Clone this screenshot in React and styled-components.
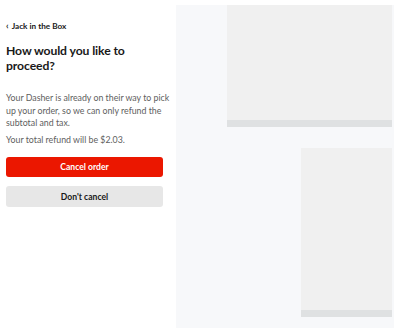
import React from "react";
import styled, { createGlobalStyle } from "styled-components";

const Global = createGlobalStyle`
  html, body { margin: 0; padding: 0; background: #ffffff; }
  body { font-family: "Lato", "Liberation Sans", sans-serif; -webkit-font-smoothing: antialiased; }
  * { box-sizing: border-box; }
`;

const Page = styled.div`
  display: flex;
  width: 398px;
  height: 329px;
  overflow: hidden;
  background: #ffffff;
`;

const Panel = styled.div`
  flex: 0 0 176px;
  padding: 20px 6px 0 6px;
  display: flex;
  flex-direction: column;
  color: #191919;
`;

const BackLink = styled.div`
  font-size: 8.2px;
  font-weight: 700;
  line-height: 12px;
  display: flex;
  align-items: center;
  gap: 3px;
`;

const Chevron = styled.span`
  font-size: 9px;
  font-weight: 700;
`;

const Heading = styled.h1`
  margin: 11px 0 0 0;
  font-size: 12.2px;
  font-weight: 700;
  line-height: 15px;
  letter-spacing: -0.1px;
`;

const Body = styled.p`
  margin: ${(p) => p.$mt}px 0 0 0;
  font-size: 8.8px;
  line-height: 12.5px;
  color: #606060;
`;

const Button = styled.button`
  display: block;
  width: 157px;
  height: ${(p) => p.$h}px;
  margin-top: ${(p) => p.$mt}px;
  border: none;
  border-radius: 3px;
  font-family: inherit;
  font-size: 8.6px;
  font-weight: 700;
  background: ${(p) => (p.$primary ? "#eb1700" : "#e7e7e7")};
  color: ${(p) => (p.$primary ? "#ffffff" : "#191919")};
  padding: 0;
`;

const Canvas = styled.div`
  flex: 0 0 218px;
  height: 323px;
  margin-top: 5px;
  background: #f7f8fa;
  display: flex;
  flex-direction: column;
`;

const Card = styled.div`
  align-self: flex-end;
  width: ${(p) => p.$w}px;
  margin-top: ${(p) => p.$mt}px;
  margin-right: 2px;
  display: flex;
  flex-direction: column;
`;

const CardFace = styled.div`
  height: ${(p) => p.$h}px;
  background: #f0f0f0;
`;

const CardBar = styled.div`
  height: 7px;
  background: #dfe1e2;
`;

export default function App() {
  return (
    <>
      <Global />
      <Page>
        <Panel>
          <BackLink>
            <Chevron>‹</Chevron>
            <span>Jack in the Box</span>
          </BackLink>
          <Heading>How would you like to proceed?</Heading>
          <Body $mt={19}>
            Your Dasher is already on their way to pick up your order, so we can only refund the subtotal and tax.
          </Body>
          <Body $mt={4}>Your total refund will be $2.03.</Body>
          <Button $primary $h={20} $mt={11}>Cancel order</Button>
          <Button $h={21} $mt={9}>Don't cancel</Button>
        </Panel>
        <Canvas>
          <Card $w={165} $mt={0}>
            <CardFace $h={115} />
            <CardBar />
          </Card>
          <Card $w={91} $mt={21}>
            <CardFace $h={162} />
            <CardBar />
          </Card>
        </Canvas>
      </Page>
    </>
  );
}
